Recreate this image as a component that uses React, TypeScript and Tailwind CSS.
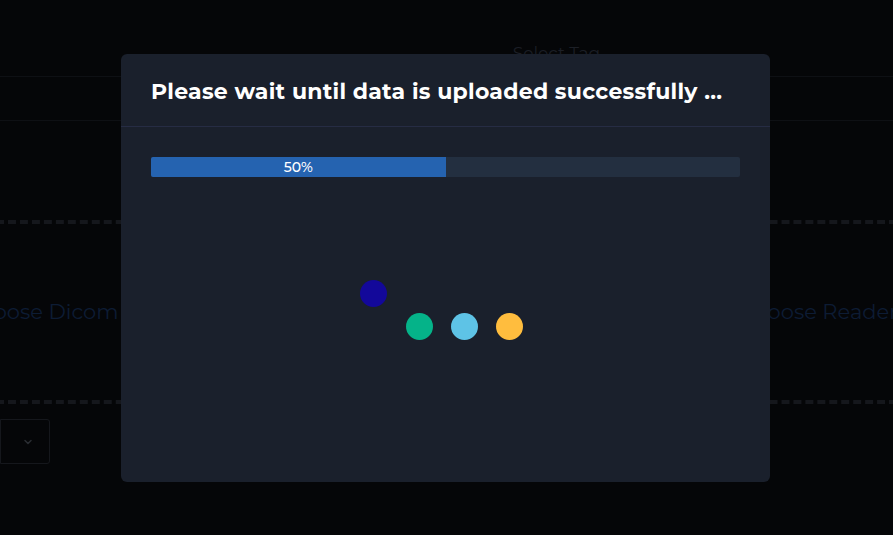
import React from "react";

const dots = [
  { c: "bg-[#13089a]", lift: true },
  { c: "bg-[#05b389]", lift: false },
  { c: "bg-[#5ec3e6]", lift: false },
  { c: "bg-[#ffbd3e]", lift: false },
];

export default function App() {
  return (
    <div className="relative w-[893px] h-[535px] overflow-hidden bg-[#050608] font-['Montserrat','Inter',sans-serif]">
      {/* page behind the overlay */}
      <div className="flex flex-col w-full">
        <div className="h-[77px] border-b border-[#0e1014] flex items-end justify-center pl-[220px]">
          <span className="text-[17px] text-[#1c1f26] leading-[26px] translate-y-[-10px]">Select Tag</span>
        </div>
        <div className="h-[44px] border-b border-[#0e1014]" />
        <div className="grid grid-cols-2 gap-0 mt-[99px] -mx-[4px]">
          <div className="h-[184px] border-y-[4px] border-dashed border-[#15171c] flex items-center justify-end pr-[328px]">
            <span className="text-[21px] text-[#0d1c34] whitespace-nowrap">Choose Dicom</span>
          </div>
          <div className="h-[184px] border-y-[4px] border-dashed border-[#15171c] flex items-center pl-[292px]">
            <span className="text-[21px] text-[#0d1c34] whitespace-nowrap">Choose Reader</span>
          </div>
        </div>
        <div className="mt-[15px] w-[50px] h-[45px] border border-[#15171c] rounded-r-[3px] flex items-center justify-end pr-[15px]">
          <svg width="12" height="12" viewBox="0 0 24 24" fill="none" stroke="#2a2d33" strokeWidth="3" strokeLinecap="round" strokeLinejoin="round">
            <path d="m6 9 6 6 6-6" />
          </svg>
        </div>
      </div>

      {/* modal */}
      <div className="absolute left-[121px] top-[54px] w-[649px] h-[428px] rounded-[6px] bg-[#1a202c] flex flex-col">
        <div className="h-[73px] border-b border-[#262c44] flex items-center px-[30px]">
          <h2 className="text-[22px] font-bold text-white tracking-[0.26px] whitespace-nowrap translate-y-[1px]">
            Please wait until data is uploaded successfully ...
          </h2>
        </div>
        <div className="px-[30px] pt-[30px]">
          <div className="h-[20px] w-full bg-[#232f40] rounded-[2px] overflow-hidden">
            <div className="h-full w-1/2 bg-[#2563b0] flex items-center justify-center">
              <span className="text-[14px] font-medium text-white leading-none">50%</span>
            </div>
          </div>
        </div>
        <div className="flex items-end justify-center gap-[18px] mt-[136px] pr-[8px]">
          {dots.map((d, i) => (
            <div
              key={i}
              className={`w-[27px] h-[27px] rounded-full ${d.c} ${d.lift ? "-translate-y-[33px] mr-[1px]" : ""}`}
            />
          ))}
        </div>
      </div>
    </div>
  );
}
